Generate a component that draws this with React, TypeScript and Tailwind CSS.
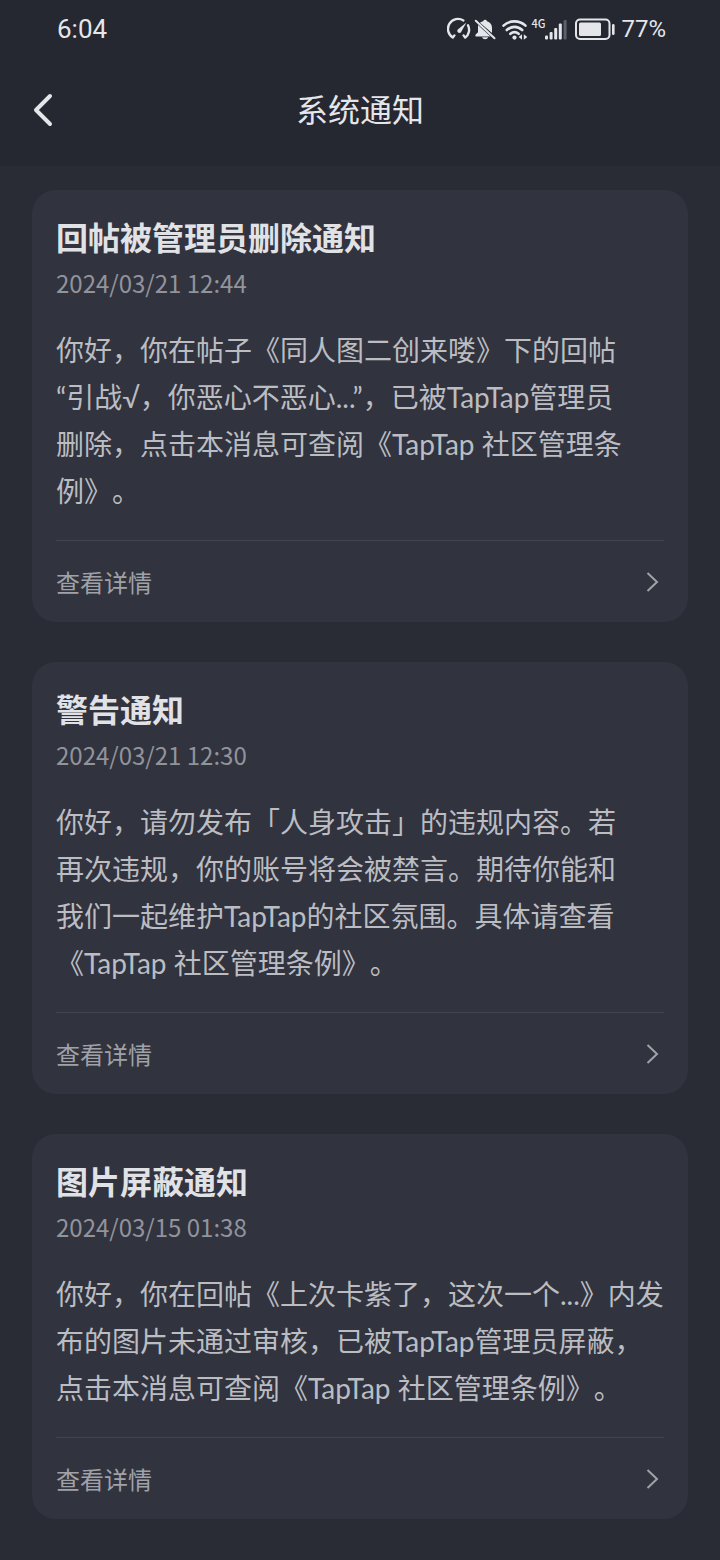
const notices = [
  {
    title: "回帖被管理员删除通知",
    date: "2024/03/21 12:44",
    lines: [
      "你好，你在帖子《同人图二创来喽》下的回帖",
      "“引战√，你恶心不恶心...”，已被TapTap管理员",
      "删除，点击本消息可查阅《TapTap 社区管理条",
      "例》。",
    ],
  },
  {
    title: "警告通知",
    date: "2024/03/21 12:30",
    lines: [
      "你好，请勿发布「人身攻击」的违规内容。若",
      "再次违规，你的账号将会被禁言。期待你能和",
      "我们一起维护TapTap的社区氛围。具体请查看",
      "《TapTap 社区管理条例》。",
    ],
  },
  {
    title: "图片屏蔽通知",
    date: "2024/03/15 01:38",
    lines: [
      "你好，你在回帖《上次卡紫了，这次一个...》内发",
      "布的图片未通过审核，已被TapTap管理员屏蔽，",
      "点击本消息可查阅《TapTap 社区管理条例》。",
    ],
  },
];

function StatusIcons() {
  return (
    <div className="flex items-center">
      {/* speed gauge */}
      <svg className="mr-0.5 h-6 w-6" viewBox="0 0 24 24" fill="none" stroke="currentColor" strokeWidth="2.4" strokeLinecap="round">
        <path d="M7.4 18.4L5.8 20.6A9.9 9.9 0 0 1 16.4 3.4M21 8.2a9.9 9.9 0 0 1-2.8 12.4l-1.6-2.2" strokeLinejoin="round" />
        <path d="M19.4 5.4l-5 9a2.1 2.1 0 1 1-3-2.4z" fill="currentColor" stroke="none" />
      </svg>
      {/* muted bell */}
      <svg className="mr-1 h-6 w-6" viewBox="0 0 24 24" fill="currentColor">
        <path d="M7 5.8A6.6 6.6 0 0 1 10.2 4.2a2 2 0 0 1 3.8 0c3.2.8 5 3.4 5 6.6v5.2zM5 8L17.5 19.5H2.8c-.8-.8-.5-1.8.4-2.5L5 15.2zM9 20.3h6.2a3.2 2.7 0 0 1-6.2 0z" />
        <path d="M2.8 3.8l18.7 17.4" stroke="currentColor" strokeWidth="2" strokeLinecap="round" />
      </svg>
      {/* wifi with traffic arrows */}
      <svg className="mr-0.5 h-6 w-7" viewBox="0 0 28 24" fill="none" stroke="currentColor" strokeWidth="2.6" strokeLinecap="round">
        <path d="M2.5 8.6c6.2-5.6 15.8-5.6 22 0M5.8 13c4.4-4.2 11-4.2 15.4 0M9.4 16.8c2.6-2.2 5.6-2.2 8.2 0" />
        <circle cx="13.5" cy="20.6" r="2.1" fill="currentColor" stroke="none" />
        <path d="M21 17.3v5.4l-3.3-2.7zM22.8 17.3v5.4l3.5-2.7z" fill="currentColor" stroke="none" />
      </svg>
      <span className="self-start font-['Noto_Sans_CJK_SC',sans-serif] text-[11px] leading-3 font-medium">4G</span>
      {/* signal bars */}
      <svg className="mr-1.5 h-6 w-6" viewBox="0 0 24 24" fill="currentColor">
        <rect x="0" y="18.5" width="3" height="4" rx="1" />
        <rect x="4.6" y="15" width="3" height="7.5" rx="1" />
        <rect x="9.2" y="11" width="3" height="11.5" rx="1" />
        <rect x="13.8" y="6.5" width="3" height="16" rx="1" />
        <rect x="18.6" y="3" width="3" height="19.5" rx="1" opacity="0.3" />
      </svg>
      {/* battery */}
      <svg className="mr-1.5 h-6 w-10" viewBox="0 0 40 24" fill="currentColor">
        <rect x="1" y="2.5" width="33.5" height="19.5" rx="4" fill="none" stroke="currentColor" strokeWidth="2" />
        <rect x="4" y="5.5" width="22" height="13.5" rx="1.5" />
        <rect x="37" y="7" width="2.6" height="11" rx="1.3" />
      </svg>
    </div>
  );
}

function NoticeCard({ title, date, lines }: { title: string; date: string; lines: string[] }) {
  return (
    <article className="rounded-3xl bg-[#31333e] px-6 pt-[22px]">
      <h2 className="text-[32px] leading-[48px] font-bold text-[#e1e2e6]">{title}</h2>
      <time className="mt-[3px] block text-2xl leading-10 text-[#92949b]">{date}</time>
      <p className="mt-6 font-['Lato','Noto_Sans_CJK_SC',sans-serif] text-[28px] leading-[47px] whitespace-pre-line text-[#bbbdc2]">
        {lines.join("\n")}
      </p>
      <a href="#" className="mt-[25px] flex h-[82px] items-center justify-between border-t border-[#42444e] text-2xl text-[#a0a2a8]">
        查看详情
        <svg className="h-6 w-6" viewBox="0 0 24 24" fill="none" stroke="currentColor" strokeWidth="2">
          <path d="M7.5 3l9.5 9-9.5 9" />
        </svg>
      </a>
    </article>
  );
}

export default function App() {
  return (
    <div className="min-h-screen bg-[#2a2c35] font-['Noto_Sans_CJK_SC',sans-serif] [text-spacing-trim:space-all]" lang="zh-CN">
      <header className="bg-[#252731] text-[#e4e6ea]">
        <div className="flex h-14 items-center justify-between pt-0.5 pr-[54px] pl-[57px] font-['Roboto',sans-serif]">
          <span className="text-[26px]">6:04</span>
          <div className="flex items-center">
            <StatusIcons />
            <span className="text-2xl">77%</span>
          </div>
        </div>
        <div className="grid h-[110px] grid-cols-[80px_1fr_80px] items-center pb-0.5">
          <button type="button" aria-label="返回" className="flex h-12 items-center pl-8">
            <svg className="h-9 w-6" viewBox="0 0 24 36" fill="none" stroke="currentColor" strokeWidth="4" strokeLinecap="round" strokeLinejoin="round">
              <path d="M18 4L4 18l14 14" />
            </svg>
          </button>
          <h1 className="pb-1 text-center text-[32px] leading-[48px]">系统通知</h1>
        </div>
      </header>
      <main className="flex flex-col gap-10 px-8 pt-6 pb-10">
        {notices.map((n) => (
          <NoticeCard key={n.date} {...n} />
        ))}
      </main>
    </div>
  );
}
